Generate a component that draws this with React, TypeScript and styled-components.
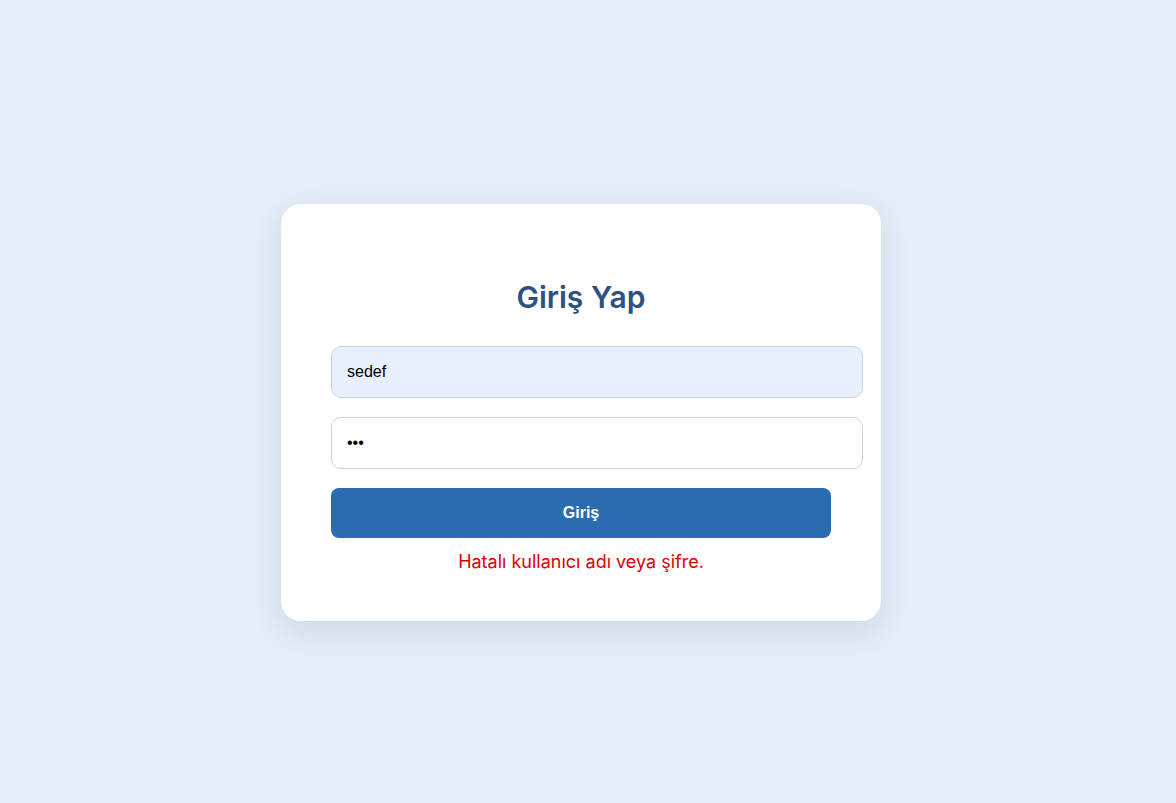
import React from "react";
import styled, { createGlobalStyle } from "styled-components";

const Global = createGlobalStyle`
  html, body { margin: 0; padding: 0; }
  body { background: #e4eef8; font-family: Inter, "Liberation Sans", sans-serif; }
`;

const Page = styled.div`
  min-height: 100vh;
  box-sizing: border-box;
  padding: 22px 14px 0 0;
  display: flex;
  align-items: center;
  justify-content: center;
`;

const Card = styled.div`
  width: 500px;
  padding: 50px 50px 48px;
  background: #ffffff;
  border-radius: 20px;
  box-shadow: 0 10px 30px rgba(30, 60, 100, 0.12);
  display: flex;
  flex-direction: column;
`;

const Title = styled.h2`
  margin: 26px 0 32px;
  font-family: Inter, "Liberation Sans", sans-serif;
  font-size: 30px;
  line-height: 34px;
  font-weight: 600;
  color: #2c5282;
  text-align: center;
`;

const Input = styled.input<{ $filled?: boolean }>`
  display: block;
  width: 100%;
  height: 50px;
  box-sizing: content-box;
  padding: 0 15px;
  margin: 0 0 19px;
  border: 1px solid #cbd5e0;
  border-radius: 10px;
  font-family: "Liberation Sans", Arial, sans-serif;
  font-size: 16px;
  color: #000;
  background: ${(p) => (p.$filled ? "#e8f0fe" : "#ffffff")};
  outline: none;
`;

const Button = styled.button`
  width: 500px;
  height: 50px;
  border: none;
  border-radius: 8px;
  background: #2b6cb0;
  color: #fff;
  font-family: "Liberation Sans", Arial, sans-serif;
  font-weight: 700;
  font-size: 16px;
  cursor: pointer;
`;

const ErrorText = styled.p`
  margin: 13px 0 0;
  font-size: 18px;
  line-height: 22px;
  color: #e00000;
  text-align: center;
`;

export default function App() {
  return (
    <>
      <Global />
      <Page>
        <Card>
          <Title>Giriş Yap</Title>
          <Input $filled type="text" defaultValue="sedef" />
          <Input type="password" defaultValue="abc" />
          <Button>Giriş</Button>
          <ErrorText>Hatalı kullanıcı adı veya şifre.</ErrorText>
        </Card>
      </Page>
    </>
  );
}
